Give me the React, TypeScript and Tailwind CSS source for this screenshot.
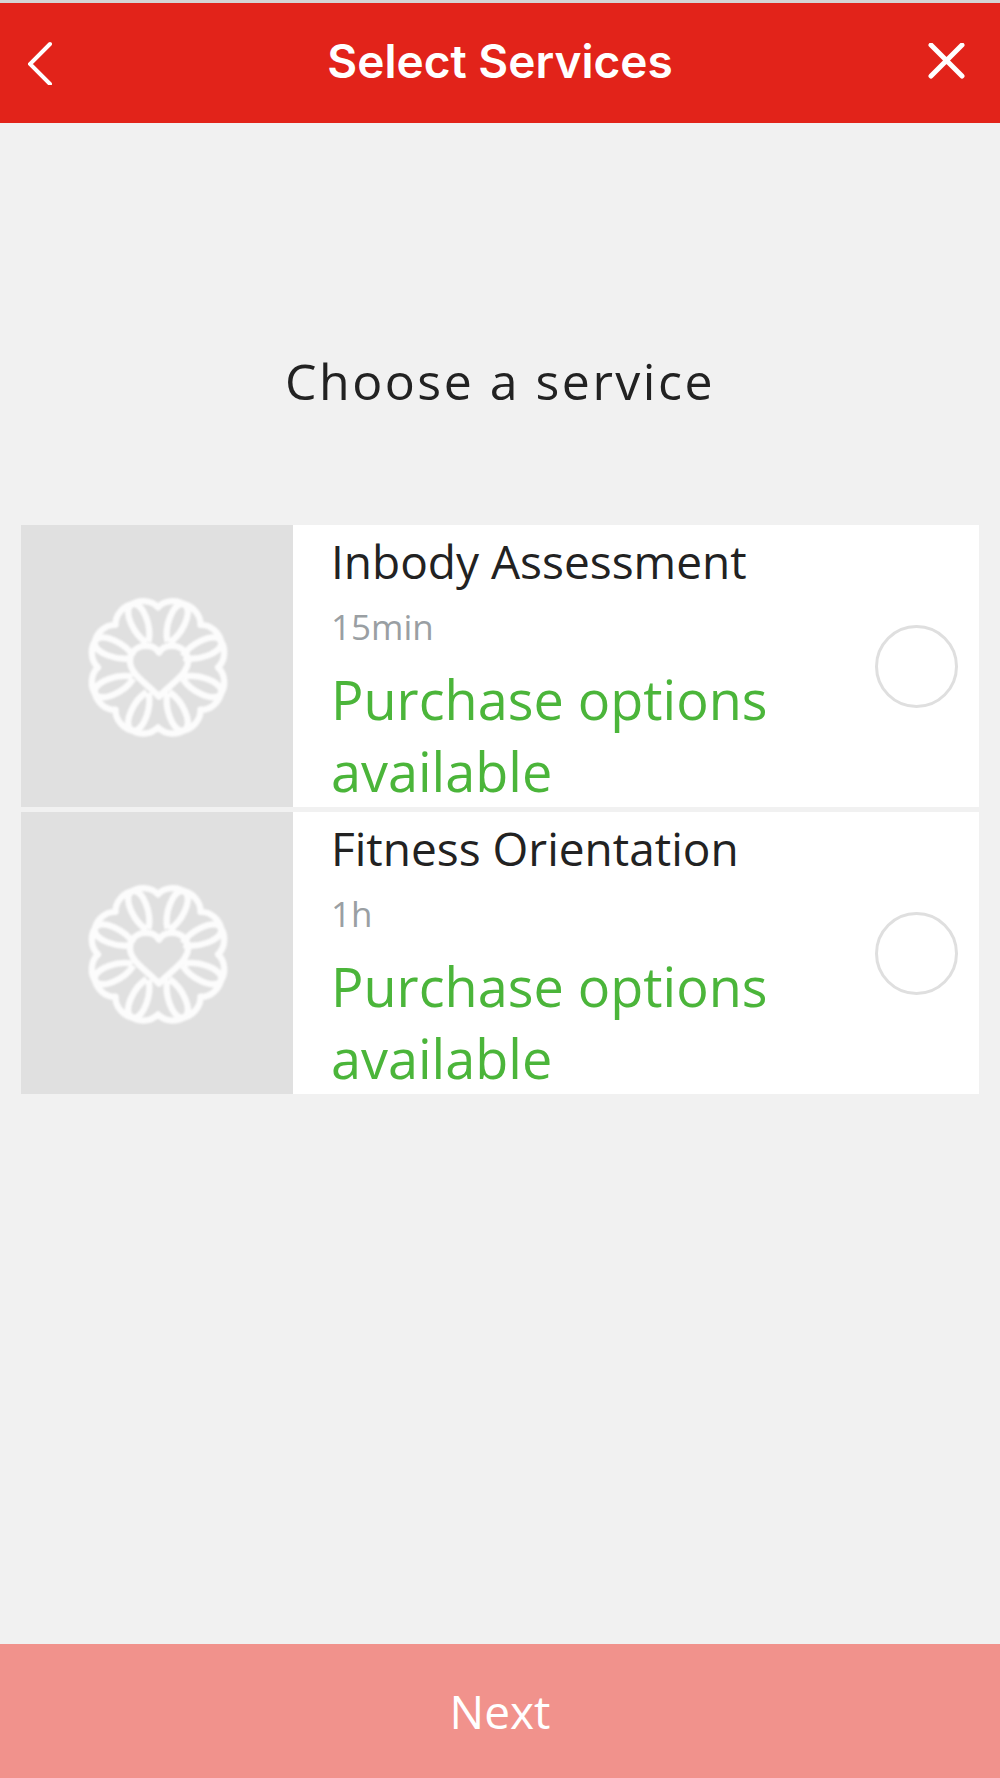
import { useState } from "react";

interface Service {
  id: string;
  name: string;
  duration: string;
  note: string;
}

const services: Service[] = [
  {
    id: "inbody",
    name: "Inbody Assessment",
    duration: "15min",
    note: "Purchase options available",
  },
  {
    id: "fitness",
    name: "Fitness Orientation",
    duration: "1h",
    note: "Purchase options available",
  },
];

const petals = [0, 45, 90, 135, 180, 225, 270, 315];

export default function App() {
  const [selected, setSelected] = useState("");

  return (
    <div className="flex min-h-screen flex-col bg-[#f1f1f1] font-['Open_Sans',sans-serif] text-[#222222]">
      <header className="flex h-[123px] items-center justify-between border-t-[3px] border-[#d5d5d5] bg-[#e2231a] px-5 text-white">
        <button type="button" aria-label="Back" className="w-16 p-2">
          <svg
            className="h-11 w-6"
            viewBox="0 0 24 44"
            fill="none"
            stroke="currentColor"
            strokeWidth="4"
            strokeLinecap="round"
          >
            <path d="M22 3 2 23l20 20" />
          </svg>
        </button>
        <h1 className="pb-1 font-['Inter',sans-serif] text-[46px] font-semibold">
          Select Services
        </h1>
        <button type="button" aria-label="Close" className="w-16 p-3">
          <svg
            className="h-10 w-10"
            viewBox="0 0 40 40"
            fill="none"
            stroke="currentColor"
            strokeWidth="5"
            strokeLinecap="round"
          >
            <path d="M3 2l31 31M34 2 3 33" />
          </svg>
        </button>
      </header>

      <main className="flex-1 px-[21px]">
        <h2 className="pt-[222px] pb-[108px] text-center text-[50px] leading-[72px] tracking-wider">
          Choose a service
        </h2>
        <div className="flex flex-col gap-[5px]">
          {services.map((service) => (
            <ServiceRow
              key={service.id}
              service={service}
              checked={selected === service.id}
              onSelect={() => setSelected(service.id)}
            />
          ))}
        </div>
      </main>

      <button
        type="button"
        className="h-[134px] bg-[#f1928c] text-[46px] text-white"
      >
        Next
      </button>
    </div>
  );
}

interface ServiceRowProps {
  service: Service;
  checked: boolean;
  onSelect: () => void;
}

function ServiceRow({ service, checked, onSelect }: ServiceRowProps) {
  return (
    <label className="flex bg-white">
      <span className="flex w-[272px] shrink-0 items-center justify-center bg-[#e0e0e0]">
        <Emblem />
      </span>
      <span className="flex flex-1 flex-col pl-[38px]">
        <span className="text-[46px] leading-[72px]">{service.name}</span>
        <span className="text-[35px] leading-[60px] text-[#9a9fa3]">
          {service.duration}
        </span>
        <span className="mt-[6px] text-[54px] leading-[72px] text-[#4bb53a]">
          {service.note}
        </span>
      </span>
      <input
        type="radio"
        name="service"
        checked={checked}
        onChange={onSelect}
        className="mr-[21px] h-[83px] w-[83px] shrink-0 appearance-none self-center rounded-full border-[3px] border-[#dfdfdf] checked:bg-[#4bb53a]"
      />
    </label>
  );
}

// Ring of eight overlapping hearts around a small one
function Emblem() {
  return (
    <svg
      className="h-[152px] w-[152px] blur-[1px]"
      viewBox="-228 -228 456 456"
      fill="none"
      stroke="#fcfcfc"
      strokeWidth="19"
      strokeLinejoin="round"
    >
      <g transform="translate(3 4)">
        {petals.map((angle) => (
          <path
            key={angle}
            transform={`rotate(${angle})`}
            d="M-34-74C-74-100-100-160-85-184-60-206-20-202 0-180 20-202 60-206 85-184 100-160 74-100 34-74"
          />
        ))}
        <path d="M3 88C-28 52-84 22-84-18-84-68-18-80 3-44 24-80 90-68 90-18 90 22 34 52 3 88Z" />
      </g>
    </svg>
  );
}
